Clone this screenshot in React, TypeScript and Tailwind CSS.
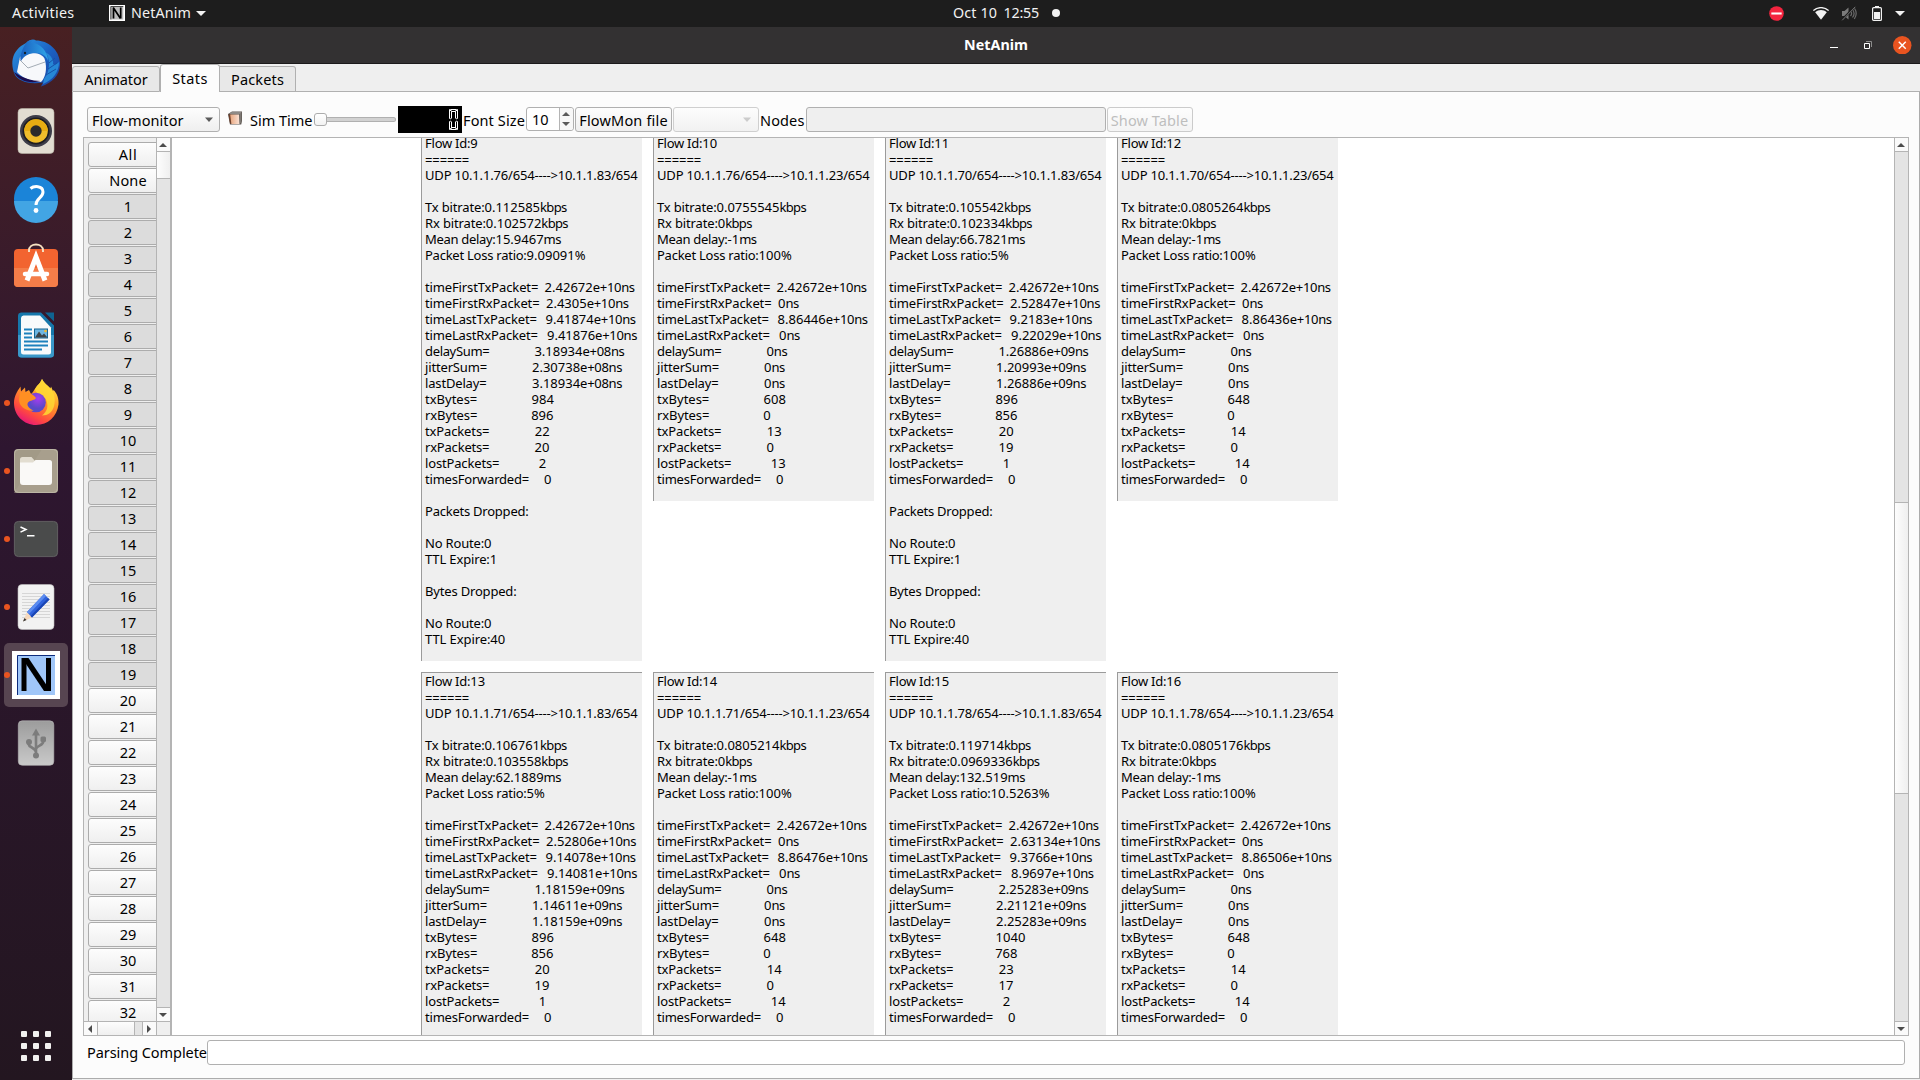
import { useLayoutEffect, useRef, type ReactNode } from "react";

/* Inline text whose letter spacing is adjusted so that it fills a given width. */
function Fit({ w, children, className = "" }: { w: number; children: string; className?: string }) {
  const ref = useRef<HTMLSpanElement>(null);
  useLayoutEffect(() => {
    const el = ref.current;
    if (!el) return;
    el.style.letterSpacing = "0px";
    const natural = el.getBoundingClientRect().width;
    el.style.letterSpacing = `${(w - natural) / children.length}px`;
  }, [w, children]);
  return (
    <span ref={ref} className={`inline-block shrink-0 whitespace-pre ${className}`}>
      {children}
    </span>
  );
}

type Flow = {
  id: number;
  src: string;
  dst: string;
  head: [string, string, string, string];
  vals: string[];
  drops?: boolean;
};

const FLOWS: Flow[] = [
  {
    id: 9, src: "76", dst: "83", drops: true,
    head: ["0.112585", "0.102572", "15.9467", "9.09091"],
    vals: ["2.42672e+10ns", "2.4305e+10ns", "9.41874e+10ns", "9.41876e+10ns", "3.18934e+08ns", "2.30738e+08ns", "3.18934e+08ns", "984", "896", "22", "20", "2", "0"],
  },
  {
    id: 10, src: "76", dst: "23",
    head: ["0.0755545", "0", "-1", "100"],
    vals: ["2.42672e+10ns", "0ns", "8.86446e+10ns", "0ns", "0ns", "0ns", "0ns", "608", "0", "13", "0", "13", "0"],
  },
  {
    id: 11, src: "70", dst: "83", drops: true,
    head: ["0.105542", "0.102334", "66.7821", "5"],
    vals: ["2.42672e+10ns", "2.52847e+10ns", "9.2183e+10ns", "9.22029e+10ns", "1.26886e+09ns", "1.20993e+09ns", "1.26886e+09ns", "896", "856", "20", "19", "1", "0"],
  },
  {
    id: 12, src: "70", dst: "23",
    head: ["0.0805264", "0", "-1", "100"],
    vals: ["2.42672e+10ns", "0ns", "8.86436e+10ns", "0ns", "0ns", "0ns", "0ns", "648", "0", "14", "0", "14", "0"],
  },
  {
    id: 13, src: "71", dst: "83",
    head: ["0.106761", "0.103558", "62.1889", "5"],
    vals: ["2.42672e+10ns", "2.52806e+10ns", "9.14078e+10ns", "9.14081e+10ns", "1.18159e+09ns", "1.14611e+09ns", "1.18159e+09ns", "896", "856", "20", "19", "1", "0"],
  },
  {
    id: 14, src: "71", dst: "23",
    head: ["0.0805214", "0", "-1", "100"],
    vals: ["2.42672e+10ns", "0ns", "8.86476e+10ns", "0ns", "0ns", "0ns", "0ns", "648", "0", "14", "0", "14", "0"],
  },
  {
    id: 15, src: "78", dst: "83",
    head: ["0.119714", "0.0969336", "132.519", "10.5263"],
    vals: ["2.42672e+10ns", "2.63134e+10ns", "9.3766e+10ns", "8.9697e+10ns", "2.25283e+09ns", "2.21121e+09ns", "2.25283e+09ns", "1040", "768", "23", "17", "2", "0"],
  },
  {
    id: 16, src: "78", dst: "23",
    head: ["0.0805176", "0", "-1", "100"],
    vals: ["2.42672e+10ns", "0ns", "8.86506e+10ns", "0ns", "0ns", "0ns", "0ns", "648", "0", "14", "0", "14", "0"],
  },
];

const HEAD: { name: string; w: number; unit: string; uw: number }[] = [
  { name: "Tx bitrate:", w: 59.5, unit: "kbps", uw: 26.5 },
  { name: "Rx bitrate:", w: 60.8, unit: "kbps", uw: 26.5 },
  { name: "Mean delay:", w: 70.5, unit: "ms", uw: 17.5 },
  { name: "Packet Loss ratio:", w: 101.6, unit: "%", uw: 11.5 },
];

/* Field name, its text width and the offset at which the value starts. */
const FIELDS: { name: string; w: number; at: number }[] = [
  { name: "timeFirstTxPacket=", w: 113.2, at: 119.6 },
  { name: "timeFirstRxPacket=", w: 114.5, at: 121 },
  { name: "timeLastTxPacket=", w: 111.8, at: 120.6 },
  { name: "timeLastRxPacket=", w: 112.8, at: 122 },
  { name: "delaySum=", w: 64.3, at: 109.4 },
  { name: "jitterSum=", w: 62, at: 107 },
  { name: "lastDelay=", w: 61.5, at: 107 },
  { name: "txBytes=", w: 52.3, at: 106.6 },
  { name: "rxBytes=", w: 52.3, at: 106.2 },
  { name: "txPackets=", w: 64.3, at: 109.8 },
  { name: "rxPackets=", w: 64.3, at: 109.6 },
  { name: "lostPackets=", w: 74.3, at: 113.8 },
  { name: "timesForwarded=", w: 104, at: 119 },
];

function Line({ children }: { children?: ReactNode }) {
  return <div className="flex h-4 whitespace-pre">{children}</div>;
}

function Value({ text }: { text: string }) {
  const m = text.match(/^([\d.]+?)(e\+\d\d)?(ns)?$/);
  if (!m) return <span>{text}</span>;
  return (
    <>
      <span>{m[1]}</span>
      {m[2] && <Fit w={28.5}>{m[2]}</Fit>}
      {m[3] && <Fit w={13.3}>{m[3]}</Fit>}
    </>
  );
}

function FlowCard({ f }: { f: Flow }) {
  return (
    <div className="w-[221px] self-start border-t border-l border-[#9b9b9b] bg-[#efefef] pb-3.5 pl-[3px] text-[13px] leading-4 text-black">
      <Line>
        <Fit w={45.3}>Flow Id:</Fit>
        <span>{f.id}</span>
      </Line>
      <Line><Fit w={44.2} className="mt-px">======</Fit></Line>
      <Line><Fit w={212.6}>{`UDP 10.1.1.${f.src}/654---->10.1.1.${f.dst}/654`}</Fit></Line>
      <Line />
      {HEAD.map((h, i) => (
        <Line key={h.name}>
          <Fit w={h.w}>{h.name}</Fit>
          <span>{f.head[i]}</span>
          <Fit w={h.uw}>{h.unit}</Fit>
        </Line>
      ))}
      <Line />
      {FIELDS.map((d, i) => (
        <Line key={d.name}>
          <span className="shrink-0" style={{ width: d.at }}>
            <Fit w={d.w}>{d.name}</Fit>
          </span>
          <Value text={f.vals[i]} />
        </Line>
      ))}
      {f.drops && (
        <>
          <Line />
          <Line><Fit w={103.5}>Packets Dropped:</Fit></Line>
          <Line />
          <Line><Fit w={66.3}>No Route:0</Fit></Line>
          <Line><Fit w={72}>TTL Expire:1</Fit></Line>
          <Line />
          <Line><Fit w={91.5}>Bytes Dropped:</Fit></Line>
          <Line />
          <Line><Fit w={66.3}>No Route:0</Fit></Line>
          <Line><Fit w={80}>TTL Expire:40</Fit></Line>
        </>
      )}
    </div>
  );
}

function Arrow({ dir }: { dir: "up" | "down" | "left" | "right" }) {
  const d = {
    up: "M0 6 L4 2 L8 6Z",
    down: "M0 2 L4 6 L8 2Z",
    left: "M6 0 L2 4 L6 8Z",
    right: "M2 0 L6 4 L2 8Z",
  }[dir];
  return (
    <svg viewBox="0 0 8 8" className="mr-px h-2 w-2 fill-[#4c4c4c]">
      <path d={d} />
    </svg>
  );
}

const BTN = "border border-[#b0b0b0] rounded-[3px] bg-gradient-to-b from-[#fdfdfd] to-[#efefef]";

function NodeList() {
  const rows = ["All", "None", ...Array.from({ length: 32 }, (_, i) => String(i + 1))];
  return (
    <div className="flex w-[86px] shrink-0 flex-col bg-[#efefef]">
      <div className="flex h-[883px]">
        <div className="w-[72px] overflow-hidden pt-1 pl-1">
          {rows.map((r) => {
            const pressed = Number(r) >= 1 && Number(r) <= 19;
            return (
              <div
                key={r}
                className={`mb-px flex h-[25px] w-20 items-center justify-center rounded-[3px] border border-[#acacac] pb-0.5 text-[14.5px] leading-5 text-black ${pressed ? "bg-[#dcdcdc]" : "bg-gradient-to-b from-[#fdfdfd] to-[#efefef]"}`}
              >
                {r === "All" ? <Fit w={18.5}>All</Fit> : r === "None" ? <Fit w={37.5}>None</Fit> : r}
              </div>
            );
          })}
        </div>
        <div className="flex w-[14px] flex-col border-l border-[#b4b4b4] bg-[#e4e4e4]">
          <div className="flex h-3.5 items-center justify-center border-b border-[#b4b4b4] bg-[#fafafa]"><Arrow dir="up" /></div>
          <div className="h-[27px] border-b border-[#b4b4b4] bg-gradient-to-r from-[#fdfdfd] to-[#efefef]" />
          <div className="flex-1" />
          <div className="flex h-3.5 items-center justify-center border-t border-[#b4b4b4] bg-[#fafafa]"><Arrow dir="down" /></div>
        </div>
      </div>
      <div className="flex h-3.5 border-t border-[#b4b4b4] bg-[#e4e4e4]">
        <div className="flex w-3.5 items-center justify-center border-r border-[#b4b4b4] bg-[#fafafa]"><Arrow dir="left" /></div>
        <div className="w-[37px] border-r border-[#b4b4b4] bg-gradient-to-b from-[#fdfdfd] to-[#efefef]" />
        <div className="flex-1" />
        <div className="flex w-3.5 items-center justify-center border-l border-[#b4b4b4] bg-[#fafafa]"><Arrow dir="right" /></div>
        <div className="w-[14px] border-l border-[#b4b4b4] bg-[#efefef]" />
      </div>
    </div>
  );
}

function MainScroll() {
  return (
    <div className="flex w-[14px] shrink-0 flex-col border-l border-[#b4b4b4] bg-[#e4e4e4]">
      <div className="flex h-3.5 shrink-0 items-center justify-center border-b border-[#b4b4b4] bg-[#fafafa]"><Arrow dir="up" /></div>
      <div className="h-[350px] shrink-0" />
      <div className="h-[292px] shrink-0 border-y border-[#b4b4b4] bg-gradient-to-r from-[#fdfdfd] to-[#efefef]" />
      <div className="flex-1" />
      <div className="flex h-3.5 shrink-0 items-center justify-center border-t border-[#b4b4b4] bg-[#fafafa]"><Arrow dir="down" /></div>
    </div>
  );
}

function Toolbar() {
  return (
    <div className="flex h-[45px] items-center pt-[11px] pb-px pl-[14px] text-[14.5px] leading-5 text-black">
      <div className={`flex h-[25px] w-[133px] items-center justify-between pr-[6px] pl-1 ${BTN}`}>
        <Fit w={91.5}>Flow-monitor</Fit>
        <svg viewBox="0 0 8 5" className="h-[5px] w-2 fill-[#5a5a5a]"><path d="M0 .5h8L4 5z" /></svg>
      </div>
      <svg viewBox="0 0 14 14" className="mt-[-4px] ml-2 h-3.5 w-3.5">
        <defs>
          <linearGradient id="cube" x1="0" x2="1"><stop offset="0" stopColor="#e8a780" /><stop offset="1" stopColor="#fbe3d6" /></linearGradient>
        </defs>
        <path d="M0 3 4 .5H14V10l-.8 3.500H2z" fill="#5c5550" />
        <path d="M3.600 1h9.800l-.6 2H1z" fill="#8e8a86" />
        <path d="M0.500 3.600 2 12.600 3 13 3 3.600z" fill="#6e3f2a" />
        <path d="M2.200 3.400H11l.6 9.600H3.400z" fill="url(#cube)" />
        <path d="M11.400 3.200 13.400 1.400V11l-1.600 2z" fill="#7d7873" />
      </svg>
      <Fit w={62.5} className="ml-2">Sim Time</Fit>
      <div className="ml-[1.5px] flex w-[82px] items-center">
        <div className="h-[13px] w-[13px] rounded-[3px] border border-[#acacac] bg-gradient-to-b from-white to-[#f2f2f2]" />
        <div className="h-[5px] flex-1 rounded-r-[3px] border border-l-0 border-[#b0b0b0] bg-[#d2d2d2]" />
      </div>
      <div className="ml-[2px] flex h-[27px] w-16 items-center justify-end bg-black pr-[3px]">
        <svg viewBox="0 0 11 23" className="h-[23px] w-[11px] fill-none stroke-white" strokeWidth="1">
          <path d="M2.500 1.500h6l-1 2h-4zM1.500 1.500v9l1 .5 1-1V3.500zM9.500 1.500v9l-1 .5-1-1V3.500zM1.500 21.500v-8l1-.5 1 1v6zM9.500 21.500v-8l-1-.5-1 1v6zM2.500 21.500h6l-1-2h-4z" />
        </svg>
      </div>
      <Fit w={62} className="ml-px">Font Size</Fit>
      <div className="mt-[-1px] ml-[1px] flex h-6 w-12 rounded-[3px] border border-[#b0b0b0] bg-white">
        <div className="flex w-8 items-center pl-[5px]">10</div>
        <div className="flex flex-1 flex-col items-center justify-center gap-1.5 rounded-r-[3px] border-l border-[#b4b4b4] bg-[#f7f7f7] pr-px">
          <svg viewBox="0 0 8 4" className="h-1 w-2 fill-[#5a5a5a]"><path d="M0 4h8L4 0z" /></svg>
          <svg viewBox="0 0 8 4" className="h-1 w-2 fill-[#5a5a5a]"><path d="M0 0h8L4 4z" /></svg>
        </div>
      </div>
      <div className={`ml-px flex h-[25px] w-[97px] items-center justify-center ${BTN}`}><Fit w={88.5}>FlowMon file</Fit></div>
      <div className="ml-px flex h-[25px] w-[86px] items-center justify-end rounded-[3px] border border-[#cfcfcf] bg-gradient-to-b from-[#fdfdfd] to-[#f1f1f1] pr-[7px]">
        <svg viewBox="0 0 8 5" className="h-[5px] w-2 fill-[#cccccc]"><path d="M0 .5h8L4 5z" /></svg>
      </div>
      <Fit w={44.5} className="ml-px">Nodes</Fit>
      <div className="ml-[1px] h-[25px] w-[300px] rounded-[3px] border border-[#b0b0b0] bg-[#efefef]" />
      <div className="ml-px flex h-[25px] w-[86px] items-center justify-center rounded-[3px] border border-[#cbcbcb] bg-gradient-to-b from-[#fdfdfd] to-[#f4f4f4] text-[#bebebe]">
        <Fit w={77.5}>Show Table</Fit>
      </div>
    </div>
  );
}

function DockItem({ children, dot, active }: { children: ReactNode; dot?: boolean; active?: boolean }) {
  return (
    <div className="relative flex h-[68px] w-[72px] items-center justify-center">
      {active && <div className="absolute inset-x-1 inset-y-0.5 rounded-[5px] bg-[#574551]" />}
      {dot && <div className="absolute top-[31px] left-1 h-1.5 w-1.5 rounded-full bg-[#e95420]" />}
      <svg viewBox="0 0 48 48" className="relative h-12 w-12">{children}</svg>
    </div>
  );
}

function Dock() {
  return (
    <div className="flex w-[72px] shrink-0 flex-col bg-gradient-to-b from-[#482022] via-[#2e1630] via-40% to-[#231620] pt-0.5">
      <DockItem>
        <defs>
          <linearGradient id="tb" x1="0" y1="0" x2="1" y2="1"><stop offset="0" stopColor="#2f9be4" /><stop offset=".5" stopColor="#1b62c4" /><stop offset="1" stopColor="#1d3f9a" /></linearGradient>
          <linearGradient id="tb2" x1="0" y1="0" x2="1" y2="0"><stop offset="0" stopColor="#1a5fbe" /><stop offset="1" stopColor="#2fa4e8" /></linearGradient>
        </defs>
        <path d="M14 4C18 0 22 0 24 1.500c12 0 23 9 24 22 .5 12-7 20-19 24l2-4C15 46 6 41 3 36-2 25 0 14 9 7z" fill="url(#tb)" />
        <path d="M8 18C13 14 30 11 33 21c2 8 1 17-4 22C18 43 8 37 5 33z" fill="#f7f8fb" />
        <path d="M7 20 16 29 33 23" fill="none" stroke="#9aa3ad" strokeWidth=".9" />
        <path d="M2 33c8 6 18 9 27 9-11 3-23 0-27-9z" fill="#1c0d4f" />
        <path d="M9 15C12 4 17 0 21 1.500c-2 2-2 2-2 2C28 4 36 12 36 22c-2-6-8-9-15-8-5 1-9 3-12 8-1-2-1-4 0-7z" fill="url(#tb2)" />
        <path d="M33 13c6 6 5 20-1 27l-1 5c10-4 16-12 16-22-3 3-5 3-6 2 1-4-2-9-8-12z" fill="#2687d6" />
        <path d="M37 24l6-5M36 30l9-6M34 36l10-6" stroke="#1652a8" strokeWidth="1" />
        <circle cx="13" cy="14" r="1.200" fill="#16222e" />
      </DockItem>
      <DockItem>
        <rect x="6" y="1.500" width="36" height="45" rx="4" fill="#e2ddd2" stroke="#b9b3a6" strokeWidth=".6" />
        <circle cx="24" cy="24" r="16" fill="#3d3d49" />
        <circle cx="24" cy="24" r="13.500" fill="#1d1d22" />
        <circle cx="24" cy="24" r="11.800" fill="#efbd2b" />
        <path d="M12.200 24a11.800 11.800 0 0 1 23.600 0z" fill="#e6ac12" />
        <circle cx="24" cy="24" r="5.700" fill="#2b2b2b" />
      </DockItem>
      <DockItem>
        <circle cx="24" cy="24" r="22" fill="#1b84d8" />
        <path d="M2 26a22 22 0 0 0 44 0z" fill="#42a5e4" />
        <path d="M18.500 13.500c3-2.500 12.500-3.500 12.500 3.500 0 6-7 6-7 13" fill="none" stroke="#fff" strokeWidth="3" />
        <circle cx="24" cy="35.500" r="2.400" fill="#fff" />
      </DockItem>
      <DockItem>
        <rect x="2" y="6" width="44" height="38" rx="4" fill="#f26430" />
        <path d="M2 25h44v15a4 4 0 0 1-4 4H6a4 4 0 0 1-4-4z" fill="#f47d49" />
        <path d="M17 9V7.500c0-8 14-8 14 0V9" fill="none" stroke="#f5dfc0" strokeWidth="2" />
        <path d="M15 37.500 24 14l9 23.500" fill="none" stroke="#fff" strokeWidth="5" />
        <path d="M13 31h22" stroke="#fff" strokeWidth="4.500" strokeLinecap="round" />
      </DockItem>
      <DockItem>
        <path d="M9 1.500h20l13 13V43a3.500 3.500 0 0 1-3.500 3.500H9.500A3.500 3.500 0 0 1 6 43V5a3.500 3.500 0 0 1 3-3.500z" fill="#1677ab" />
        <path d="M6 24h36v19a3.500 3.500 0 0 1-3.500 3.500h-29A3.500 3.500 0 0 1 6 43z" fill="#3a98c9" />
        <path d="M33 1.500h9v9z" fill="#0f6391" />
        <path d="M9 7a3 3 0 0 1 2.500-2.500H28l11 12V41a2.500 2.500 0 0 1-2.500 2.500h-25A2.500 2.500 0 0 1 9 41z" fill="#f8fafb" />
        <path d="M12 18.500h8M12 22.500h8M12 26.500h8M12 30.500h24M12 34.500h24M12 38.500h18" stroke="#1d81bd" strokeWidth="2" />
        <rect x="22.500" y="18" width="13" height="9" fill="#6db6e2" stroke="#156492" />
        <path d="M23 26.500l4-6 3 4 2-2 3.500 4z" fill="#3d4448" />
        <circle cx="33.500" cy="20" r="1.300" fill="#f4b62a" />
      </DockItem>
      <DockItem dot>
        <defs>
          <linearGradient id="ff" x1=".8" y1="0" x2=".25" y2="1"><stop offset="0" stopColor="#ffee48" /><stop offset=".4" stopColor="#ff9a26" /><stop offset=".75" stopColor="#ff4a3f" /><stop offset="1" stopColor="#e3117f" /></linearGradient>
          <radialGradient id="ffp" cx=".6" cy=".3"><stop offset="0" stopColor="#a63cf0" /><stop offset="1" stopColor="#5a49c8" /></radialGradient>
        </defs>
        <g transform="translate(0 -1.500)">
          <path d="M30 1.500c2 4 5 6 8.500 9.500l.5-2 2 4.500 .7-1C45 16 47 21 46.500 27 45 39 36 47.500 24 47.500S2 38 2 25.500C2 19 5 14 8.500 9l.5 5 4-4 .5 4.500L17 12.500l2 4C22 14 22 12 24 10c2-3 4-4 6-8.500z" fill="url(#ff)" />
          <path d="M30 1.500c2 4 5 6 8.500 9.500C42 15 44 21 42 29c-2 6-6 9-12 9 5-4 7-9 4-16-2-4-10-5-11-10 1-4 5-5 7-10.500z" fill="#ffd834" opacity=".85" />
          <circle cx="24" cy="25" r="9.800" fill="url(#ffp)" />
          <path d="M8 15c5-1 12 0 16 5.500-1 2.500-6 2-8 4.500-2 3 2 7 6 8-8 1-15-4-15-11z" fill="#ff8f22" />
        </g>
      </DockItem>
      <DockItem dot>
        <rect x="2" y="2" width="44" height="44" rx="4" fill="#a29a87" />
        <path d="M30 2h12a4 4 0 0 1 4 4v36a4 4 0 0 1-4 4H2z" fill="#aba491" opacity=".6" />
        <rect x="2.500" y="2.500" width="43" height="43" rx="4" fill="none" stroke="#c2bcab" strokeWidth=".8" />
        <path d="M8 14v-1.500A2.500 2.500 0 0 1 10.500 10h9l3.500 4h14v6H8z" fill="#e2ddd0" />
        <path d="M8 15.500h13l2.500-2.500h14A2.500 2.500 0 0 1 40 15.500V35a3 3 0 0 1-3 3H11a3 3 0 0 1-3-3z" fill="#faf9f7" />
      </DockItem>
      <DockItem dot>
        <rect x="2.400" y="6.400" width="43.200" height="35.200" rx="4" fill="#4a4b4b" stroke="#696969" strokeWidth=".8" />
        <path d="M8.500 12 14 14.500 8.500 17.200M15 20.700h7.500" fill="none" stroke="#fff" strokeWidth="1.500" />
      </DockItem>
      <DockItem dot>
        <rect x="6" y="1.500" width="36" height="45" rx="4" fill="#f2f2f2" stroke="#bdbdbd" strokeWidth=".6" />
        <path d="M10 10.500h28M10 13.500h28M10 16.500h28M10 19.500h28M10 22.500h28M10 25.500h28M10 28.500h28M10 31.500h28M10 34.500h28" stroke="#d3d3d3" strokeWidth=".9" />
        <path d="M11 38.500 15 29l5 5.500z" fill="#f6d9bd" />
        <path d="M11 38.500l1.500-3.500 2 2z" fill="#333" />
        <path d="M15 29 32 11l5.500 5.500L20 34.500z" fill="#2f62dc" />
        <path d="M15 29 32 11l2 2L17 31z" fill="#5b8cf0" />
        <path d="M18.500 33 36 15l1.500 1.500L20 34.500z" fill="#1b46b4" />
      </DockItem>
      <DockItem dot active>
        <rect width="48" height="48" fill="#fff" />
        <rect x="5" y="4" width="38" height="40" fill="#a0c6f8" />
        <path d="M5.500 44V4.500H43" fill="none" stroke="#0e2c7d" />
        <path d="M12 40V7M36.500 40V7" stroke="#000" strokeWidth="5" />
        <path d="M10 7h6.500l22 33H32z" fill="#000" />
      </DockItem>
      <DockItem>
        <defs><linearGradient id="usb" x1="0" x2="0" y1="0" y2="1"><stop offset="0" stopColor="#9c9c9c" /><stop offset="1" stopColor="#c9c9c9" /></linearGradient></defs>
        <rect x="6.300" y="1.800" width="35.500" height="44.500" rx="4" fill="url(#usb)" stroke="#b8b8b8" strokeWidth=".6" />
        <path d="M24 38V14M24 33c-1-5-7-4-7.500-8v-2M24 30c1-4 7-3 7.500-8v-2" fill="none" stroke="#7c7c7c" strokeWidth="2.600" />
        <path d="M20 16.500 24 9.500l4 7z" fill="#7c7c7c" />
        <circle cx="17" cy="23" r="3" fill="#7c7c7c" />
        <rect x="28.500" y="17.500" width="5.500" height="5.500" rx="1.500" fill="#7c7c7c" />
        <circle cx="24" cy="36.500" r="3" fill="#7c7c7c" />
      </DockItem>
      <div className="mt-auto mb-[19px] ml-[21px] grid w-[30px] grid-cols-3 gap-1.5">
        {Array.from({ length: 9 }, (_, i) => (
          <div key={i} className="h-1.5 w-1.5 rounded-[1px] bg-[#f2f1f0]" />
        ))}
      </div>
    </div>
  );
}

function TopBar() {
  return (
    <div className="flex h-[27px] shrink-0 items-center bg-[#1d1d1d] pb-px pl-3 text-[14.3px] leading-5 text-[#f2f2f2]">
      <Fit w={62.5}>Activities</Fit>
      <svg viewBox="0 0 16 16" className="ml-[34.500px] h-4 w-4">
        <rect width="16" height="16" fill="#fff" />
        <rect x="1.700" y="1.500" width="12.600" height="13" fill="#bcbcbc" />
        <path d="M1.800 14.500V1.500h12.500" fill="none" stroke="#222" strokeWidth=".8" />
        <path d="M4.500 13.500V2.500M11.700 13.500V2.500M4.200 2.500l7.300 11" stroke="#000" strokeWidth="1.700" />
      </svg>
      <Fit w={60} className="ml-[6px]">NetAnim</Fit>
      <svg viewBox="0 0 10 5" className="ml-[5px] h-[5px] w-[10px] fill-[#f2f2f2]"><path d="M0 0h10L5 5z" /></svg>
      <div className="ml-[747px] flex w-[110px] items-center">
        <Fit w={44}>Oct 10</Fit>
        <Fit w={35.5} className="ml-[6.500px]">12:55</Fit>
        <div className="ml-[13px] h-2 w-2 shrink-0 rounded-full bg-[#f2f2f2]" />
      </div>
      <div className="mr-[15px] ml-auto flex items-center">
        <svg viewBox="0 0 16 16" className="mr-[29px] h-[15px] w-[15px]"><circle cx="8" cy="8" r="7.800" fill="#f4243f" /><rect x="2.500" y="6.900" width="11" height="2.200" fill="#fff" /></svg>
        <svg viewBox="0 0 16 13" className="mr-[12px] h-[13px] w-4">
          <path d="M.4 3.600C4.500-.4 11.500-.4 15.600 3.600" fill="none" stroke="#f2f2f2" strokeWidth="1.300" />
          <path d="M2.200 5.200c3.300-2.800 8.300-2.800 11.600 0L8 12.800z" fill="#f2f2f2" />
        </svg>
        <svg viewBox="0 0 16 15" className="mr-[15px] h-[15px] w-4">
          <path d="M1 5h2.500L7.500 1.500v12L3.500 10H1z" fill="#7b7b7b" />
          <path d="M9.500 5c1.300 1.500 1.300 3.500 0 5M11.500 3.500c2 2.500 2 5.500 0 8M13.300 2c2.400 3.500 2.400 7.500 0 11" fill="none" stroke="#6b6b6b" strokeWidth="1.200" />
          <path d="M.8 14 14 .5" stroke="#1d1d1d" strokeWidth="2" />
          <path d="M1.200 14.300 14.300 .8" stroke="#808080" strokeWidth=".9" />
        </svg>
        <svg viewBox="0 0 10 15" className="mr-[13px] h-[15px] w-[10px]">
          <path d="M3 0h4v2H3z" fill="#f2f2f2" />
          <rect x=".6" y="1.700" width="8.800" height="12.700" rx="1" fill="none" stroke="#f2f2f2" strokeWidth="1.200" />
          <rect x="2" y="6" width="6" height="7" fill="#f2f2f2" />
        </svg>
        <svg viewBox="0 0 10 5" className="mt-px h-[5px] w-[10px] fill-[#f2f2f2]"><path d="M0 0h10L5 5z" /></svg>
      </div>
    </div>
  );
}

function TitleBar() {
  return (
    <div className="flex h-[37px] shrink-0 items-center border-b border-[#1c1a1b] bg-[#333132]">
      <div className="ml-[892px] text-[14.3px] leading-5 font-bold text-white"><Fit w={64}>NetAnim</Fit></div>
      <div className="mr-[8.500px] ml-auto flex items-center">
        <div className="mt-[5px] mr-[26px] h-px w-2 bg-white" />
        <svg viewBox="0 0 8 8" className="mr-[21px] h-2 w-2 fill-none"><path d="M.5 2.500h5v5h-5z" stroke="#fff" /><path d="M2 .5h5.500V6" stroke="#8d8c8c" /></svg>
        <svg viewBox="0 0 18 18" className="h-[18.500px] w-[18.500px]"><circle cx="9" cy="9" r="9" fill="#e95420" /><path d="M5.600 5.600l6.800 6.800M12.400 5.600l-6.800 6.800" stroke="#fff" strokeWidth="1.400" /></svg>
      </div>
    </div>
  );
}

export default function App() {
  return (
    <div className="flex h-[1080px] w-[1920px] flex-col overflow-hidden font-['Noto_Sans',sans-serif]">
      <TopBar />
      <div className="flex min-h-0 flex-1">
        <Dock />
        <div className="flex min-w-0 flex-1 flex-col bg-[#efefef]">
          <TitleBar />
          <div className="flex h-[28px] shrink-0 items-end text-[14.5px] leading-5 text-black">
            <div className="flex h-[26px] w-[88px] items-center justify-center rounded-t-[3px] border border-[#b0b0b0] bg-[#e8e8e8]"><Fit w={63.5}>Animator</Fit></div>
            <div className="flex h-[28px] w-[60px] items-center justify-center rounded-t-[3px] border border-b-0 border-[#b0b0b0] bg-[#fcfcfc] pb-0.5"><Fit w={35.5}>Stats</Fit></div>
            <div className="flex h-[26px] w-[76px] items-center justify-center rounded-tr-[3px] border border-l-0 border-[#b0b0b0] bg-[#e8e8e8]"><Fit w={53}>Packets</Fit></div>
            <div className="h-px flex-1 bg-[#b0b0b0]" />
          </div>
          <div className="mb-px flex flex-1 flex-col border border-t-0 border-[#acacac] bg-[#fcfcfc]">
            <Toolbar />
            <div className="mr-2.5 ml-2.5 flex h-[899px] shrink-0 border border-[#b4b4b4] bg-white">
              <NodeList />
              <div className="w-0.5 shrink-0 bg-[#b4b4b4]" />
              <div className="min-w-0 flex-1 overflow-hidden pl-[249px]">
                <div className="-mt-1 grid w-max grid-cols-4 gap-[11px]">
                  {FLOWS.map((f) => <FlowCard key={f.id} f={f} />)}
                </div>
              </div>
              <MainScroll />
            </div>
            <div className="mt-1 mr-[14px] flex items-center pl-[14px] text-[14.5px] leading-5 text-black">
              <Fit w={120} className="mb-[2px]">Parsing Complete</Fit>
              <div className="h-[25px] flex-1 rounded-[3px] border border-[#b0b0b0] bg-white" />
            </div>
          </div>
        </div>
      </div>
    </div>
  );
}
